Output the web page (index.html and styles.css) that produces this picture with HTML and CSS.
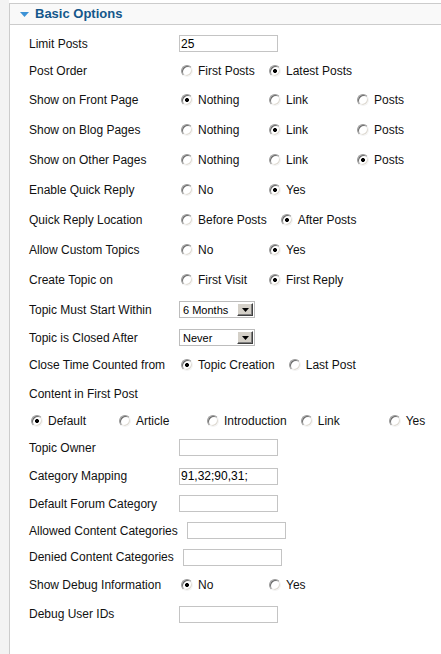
FILE: index.html
```html
<!DOCTYPE html>
<html>
<head>
<meta charset="utf-8">
<title>Basic Options</title>
<link rel="stylesheet" href="styles.css">
</head>
<body>
<div class="page">
  <div class="gutter"></div>
  <div class="panel">
    <h3 class="title"><svg class="arrow" width="9" height="5" viewBox="0 0 9 5"><path d="M0 0H9L4.5 5Z" fill="#3c92d6"/></svg>Basic Options</h3>
    <div class="content">
      <div class="row h27"><span class="key">Limit Posts</span><input class="text" type="text" value="25"></div>
      <div class="row h28"><span class="key">Post Order</span>
        <label class="opt"><input class="radio" type="radio" name="po">First Posts</label>
        <label class="opt"><input class="radio" type="radio" name="po" checked>Latest Posts</label></div>
      <div class="row h30"><span class="key">Show on Front Page</span>
        <label class="opt"><input class="radio" type="radio" name="fp" checked>Nothing</label>
        <label class="opt"><input class="radio" type="radio" name="fp">Link</label>
        <label class="opt"><input class="radio" type="radio" name="fp">Posts</label></div>
      <div class="row h30"><span class="key">Show on Blog Pages</span>
        <label class="opt"><input class="radio" type="radio" name="bp">Nothing</label>
        <label class="opt"><input class="radio" type="radio" name="bp" checked>Link</label>
        <label class="opt"><input class="radio" type="radio" name="bp">Posts</label></div>
      <div class="row h30"><span class="key">Show on Other Pages</span>
        <label class="opt"><input class="radio" type="radio" name="op">Nothing</label>
        <label class="opt"><input class="radio" type="radio" name="op">Link</label>
        <label class="opt"><input class="radio" type="radio" name="op" checked>Posts</label></div>
      <div class="row h30"><span class="key">Enable Quick Reply</span>
        <label class="opt"><input class="radio" type="radio" name="qr">No</label>
        <label class="opt"><input class="radio" type="radio" name="qr" checked>Yes</label></div>
      <div class="row h30"><span class="key">Quick Reply Location</span>
        <label class="opt"><input class="radio" type="radio" name="ql">Before Posts</label>
        <label class="opt"><input class="radio" type="radio" name="ql" checked>After Posts</label></div>
      <div class="row h30"><span class="key">Allow Custom Topics</span>
        <label class="opt"><input class="radio" type="radio" name="ct">No</label>
        <label class="opt"><input class="radio" type="radio" name="ct" checked>Yes</label></div>
      <div class="row h30"><span class="key">Create Topic on</span>
        <label class="opt"><input class="radio" type="radio" name="cr">First Visit</label>
        <label class="opt"><input class="radio" type="radio" name="cr" checked>First Reply</label></div>
      <div class="row h29"><span class="key">Topic Must Start Within</span>
        <div class="select"><span class="sel-val">6 Months</span><span class="sel-btn"><svg width="7" height="4" viewBox="0 0 7 4"><path d="M0 0H7L3.5 4Z" fill="#000"/></svg></span></div></div>
      <div class="row h27"><span class="key">Topic is Closed After</span>
        <div class="select"><span class="sel-val">Never</span><span class="sel-btn"><svg width="7" height="4" viewBox="0 0 7 4"><path d="M0 0H7L3.5 4Z" fill="#000"/></svg></span></div></div>
      <div class="row h28"><span class="key">Close Time Counted from</span>
        <label class="opt"><input class="radio" type="radio" name="tc" checked>Topic Creation</label>
        <label class="opt"><input class="radio" type="radio" name="tc">Last Post</label></div>
      <div class="row h29"><span class="key">Content in First Post</span></div>
      <div class="row h25">
        <label class="opt"><input class="radio" type="radio" name="cf" checked>Default</label>
        <label class="opt"><input class="radio" type="radio" name="cf">Article</label>
        <label class="opt"><input class="radio" type="radio" name="cf">Introduction</label>
        <label class="opt"><input class="radio" type="radio" name="cf">Link</label>
        <label class="opt"><input class="radio" type="radio" name="cf">Yes</label></div>
      <div class="row h29"><span class="key">Topic Owner</span><input class="text" type="text" value=""></div>
      <div class="row h28"><span class="key">Category Mapping</span><input class="text" type="text" value="91,32;90,31;"></div>
      <div class="row h27"><span class="key">Default Forum Category</span><input class="text" type="text" value=""></div>
      <div class="row h27"><span class="key">Allowed Content Categories</span><input class="text" type="text" value=""></div>
      <div class="row h26"><span class="key">Denied Content Categories</span><input class="text" type="text" value=""></div>
      <div class="row h29"><span class="key">Show Debug Information</span>
        <label class="opt"><input class="radio" type="radio" name="db" checked>No</label>
        <label class="opt"><input class="radio" type="radio" name="db">Yes</label></div>
      <div class="row h30"><span class="key">Debug User IDs</span><input class="text" type="text" value=""></div>
    </div>
  </div>
</div>
</body>
</html>
```

FILE: styles.css
```css
html, body {
  margin: 0;
  padding: 0;
  background: #ffffff;
}
body {
  width: 441px;
  height: 654px;
  overflow: hidden;
  font-family: "Liberation Sans", Arial, sans-serif;
  font-size: 12px;
  color: #111111;
}
.page {
  display: flex;
  height: 654px;
}
.gutter {
  width: 9px;
  flex: none;
  background: #f3f3f3;
}
.panel {
  flex: 1;
  min-width: 0;
  margin-top: 3px;
  border-left: 1px solid #cccccc;
  background: #ffffff;
}
.title {
  margin: 0;
  height: 20px;
  display: flex;
  align-items: center;
  gap: 6px;
  padding-left: 10px;
  border-top: 1px solid #cccccc;
  border-bottom: 1px solid #cccccc;
  background: #f9f9f9;
  color: #14578b;
  font-size: 13px;
  font-weight: bold;
  line-height: 20px;
}
.arrow {
  display: block;
  flex: none;
}
.content {
  padding: 5px 0 0 19px;
}
.row {
  display: flex;
  align-items: center;
}
.h25 { height: 25px; }
.h26 { height: 26px; }
.h27 { height: 27px; }
.h28 { height: 28px; }
.h29 { height: 29px; }
.h30 { height: 30px; }
.key {
  min-width: 150px;
  padding-right: 9px;
  box-sizing: border-box;
  white-space: nowrap;
}
.text {
  width: 99px;
  height: 17px;
  box-sizing: border-box;
  margin: 0;
  padding: 0 1px;
  border: 1px solid #c4c4c4;
  font-family: "Liberation Sans", Arial, sans-serif;
  font-size: 12px;
  color: #000000;
  background: #ffffff;
  outline: none;
}
.opt {
  display: flex;
  align-items: center;
  min-width: 86px;
  margin-left: 2px;
  padding-right: 12px;
  box-sizing: border-box;
  white-space: nowrap;
}
.opt:last-child {
  min-width: 0;
  padding-right: 0;
}
.radio {
  appearance: none;
  -webkit-appearance: none;
  width: 12px;
  height: 12px;
  margin: 0 5px 0 0;
  flex: none;
  border-radius: 50%;
  box-sizing: border-box;
  border: 1px solid;
  border-color: #9a9a9a #f4f4f4 #f4f4f4 #9a9a9a;
  box-shadow: inset 1px 1px 0 #6a6a6a, inset -1px -1px 0 #dedad2;
  background: #ffffff;
}
.radio:checked {
  background: radial-gradient(circle, #000000 0 1.6px, #ffffff 2.3px);
}
.select {
  display: flex;
  align-items: center;
  width: 76px;
  height: 17px;
  box-sizing: border-box;
  border: 1px solid #bdbdbd;
  background: #ffffff;
  font-size: 11px;
  color: #000000;
}
.sel-val {
  flex: 1;
  padding-left: 3px;
}
.sel-btn {
  width: 16px;
  height: 13px;
  margin-right: 1px;
  box-sizing: border-box;
  display: flex;
  align-items: center;
  justify-content: center;
  background: #d4d0c8;
  border: 1px solid;
  border-color: #ffffff #404040 #404040 #ffffff;
  box-shadow: inset -1px -1px 0 #808080;
}
```
